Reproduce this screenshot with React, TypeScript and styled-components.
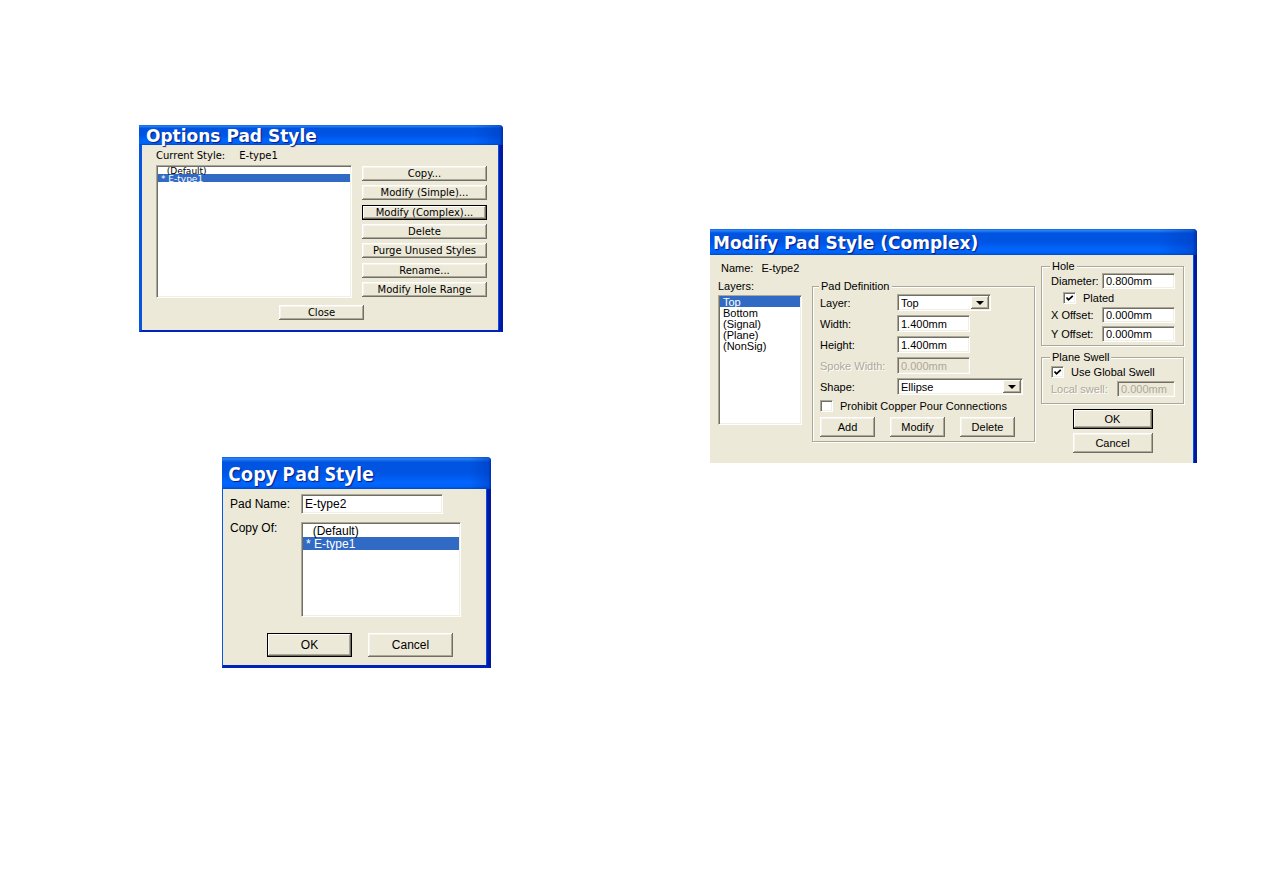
import React from 'react';
import styled, { createGlobalStyle, css } from 'styled-components';

const face = '#ece9d8';
const shade = '#aca899';
const dark = '#716f64';
const highlight = '#316ac5';

const GlobalStyle = createGlobalStyle`
  *, *::before, *::after { box-sizing: border-box; }
  body { margin: 0; background: #fff; }
  button, input, select { font: inherit; color: inherit; margin: 0; border-radius: 0; }
`;

const Page = styled.main`
  display: grid;
  grid-template-columns: 139fr 364fr 207fr 487fr 66fr;
  align-items: start;
  min-height: 100vh;
  color: #000;
`;

const LeftColumn = styled.div`
  grid-column: 2;
  display: flex;
  flex-direction: column;
  gap: 125px;
  padding: 125px 0 40px;
`;

const RightColumn = styled.div`
  grid-column: 4;
  padding: 229px 0 40px;
`;

const Dialog = styled.section<{ $font: string }>`
  font: ${p => p.$font};
  background: ${face};
  border-top-right-radius: 4px;
  overflow: hidden;
`;

const TitleBar = styled.h2<{ $font: string; $height: number; $indent: number }>`
  margin: 0;
  height: ${p => p.$height}px;
  padding: 1px 0 0 ${p => p.$indent}px;
  font: ${p => p.$font};
  line-height: ${p => p.$height}px;
  color: #fff;
  text-shadow: 1px 1px 1px #0a1883;
  white-space: nowrap;
  background:
    linear-gradient(to right, transparent 92%, rgba(0, 60, 190, 0.5) 99%, #0030b0),
    linear-gradient(#0b62e8 0, #2a83f5 6%, #0054e0 16%, #0054e3 50%, #0066ff 80%, #0062f5 92%, #0048c8 100%);
`;

const Frame = styled.div<{ $left: number; $right: number; $bottom: number }>`
  border-style: solid;
  border-width: 0 ${p => p.$right}px ${p => p.$bottom}px ${p => p.$left}px;
  border-color: transparent #0019a0 #0024b8 #0855dd;
  box-shadow: inset -1px 0 #0050e8;
`;

const PushButton = styled.button<{ $width?: number; $height: number; $default?: boolean }>`
  display: block;
  flex: none;
  width: ${p => (p.$width ? `${p.$width}px` : '100%')};
  height: ${p => p.$height}px;
  padding: 0;
  border: 0;
  line-height: ${p => p.$height - 2}px;
  text-align: center;
  white-space: nowrap;
  background: ${face};
  box-shadow: inset -1px -1px ${dark}, inset 1px 1px #fff, inset -2px -2px ${shade}, inset 2px 2px #f6f4ea;
  ${p => p.$default && css`
    box-shadow: inset 0 0 0 1px #000, inset -2px -2px ${dark}, inset 2px 2px #fff, inset -3px -3px ${shade};
  `}
`;

const sunken = css`
  border: 1px solid;
  border-color: ${shade} #fff #fff ${shade};
  background: #fff;
  box-shadow: inset 1px 1px ${dark}, inset -1px -1px #f1efe2;
`;

const TextInput = styled.input<{ $width: number; $height: number }>`
  ${sunken}
  display: block;
  width: ${p => p.$width}px;
  height: ${p => p.$height}px;
  padding: 0 3px;
  outline: 0;
  &:disabled {
    background: ${face};
    color: ${shade};
    opacity: 1;
  }
`;

const ListBox = styled.select<{ $height: number; $row: number; $top?: number }>`
  ${sunken}
  appearance: none;
  display: block;
  width: 100%;
  height: ${p => p.$height}px;
  padding: ${p => p.$top ?? 1}px 1px 1px;
  outline: 0;
  overflow: hidden;
  option {
    display: block;
    height: ${p => p.$row}px;
    min-height: 0;
    padding: 0 0 0 3px;
    line-height: ${p => p.$row}px;
    color: #000;
    white-space: pre;
  }
  option:checked {
    background: linear-gradient(${highlight}, ${highlight});
    -webkit-text-fill-color: #fff;
  }
`;

const CompactListBox = styled(ListBox)`
  font-size: 9px;
`;

const ComboFrame = styled.span<{ $width: number }>`
  ${sunken}
  display: grid;
  grid-template-columns: 1fr 18px;
  width: ${p => p.$width}px;
  height: 17px;
  padding: 1px;
`;

const ComboSelect = styled.select`
  appearance: none;
  grid-area: 1 / 1 / 2 / 3;
  height: 13px;
  padding: 1px 20px 0 2px;
  border: 0;
  outline: 0;
  line-height: 13px;
  background: transparent;
`;

const ComboArrow = styled.span`
  grid-area: 1 / 2;
  display: grid;
  place-items: center;
  height: 13px;
  pointer-events: none;
  background: ${face};
  box-shadow: inset -1px -1px ${dark}, inset 1px 1px #fff, inset -2px -2px ${shade};
`;

const Tick = styled.input`
  ${sunken}
  appearance: none;
  flex: none;
  width: 13px;
  height: 12px;
  &:checked {
    background: #fff url("data:image/svg+xml,%3Csvg xmlns='http://www.w3.org/2000/svg' viewBox='0 0 9 8'%3E%3Cpath d='M1.5 3.5 3.5 5.8 7.8 1.8' fill='none' stroke='%23000' stroke-width='1.8'/%3E%3C/svg%3E") center / 9px 8px no-repeat;
  }
`;

const TickRow = styled.label<{ $indent?: number; $height: number }>`
  display: flex;
  align-items: center;
  gap: 7px;
  height: ${p => p.$height}px;
  padding-left: ${p => p.$indent ?? 0}px;
  white-space: nowrap;
`;

const Group = styled.fieldset<{ $pad: string; $gap: number }>`
  display: flex;
  flex-direction: column;
  gap: ${p => p.$gap}px;
  min-width: 0;
  margin: 0;
  padding: ${p => p.$pad};
  border: 1px solid ${shade};
  box-shadow: 1px 1px #fff, inset 1px 1px #fff;
  legend {
    height: 12px;
    margin-left: -1px;
    padding: 0 2px;
    line-height: 12px;
    background: ${face};
  }
`;

const FieldRow = styled.div<{ $label?: number }>`
  display: grid;
  grid-template-columns: ${p => (p.$label ? `${p.$label}px` : '1fr')} auto;
  align-items: center;
  white-space: nowrap;
  ${p => p.$label && css`justify-content: start;`}
`;

const Label = styled.label<{ $disabled?: boolean }>`
  ${p => p.$disabled && css`
    color: ${shade};
    text-shadow: 1px 1px #fff;
  `}
`;

/* Options Pad Style */

const OptionsBody = styled(Frame)`
  display: grid;
  grid-template-columns: 1fr 125px;
  column-gap: 10px;
  padding: 5px 12px 10px 14px;
`;

const CurrentStyle = styled.p`
  grid-column: 1 / 3;
  display: flex;
  gap: 14px;
  margin: 0 0 3px;
  line-height: 12px;
`;

const ButtonStack = styled.div`
  display: flex;
  flex-direction: column;
  justify-content: space-between;
  padding: 1px 0;
`;

const OptionsFooter = styled.div`
  grid-column: 1 / 3;
  display: flex;
  justify-content: center;
  padding-top: 7px;
`;

/* Copy Pad Style */

const CopyDialog = styled(Dialog)`
  margin: 0 12px 0 83px;
`;

const CopyBody = styled(Frame)`
  display: grid;
  grid-template-columns: 71px 1fr;
  row-gap: 8px;
  padding: 5px 26px 8px 7px;
`;

const CopyLabel = styled(Label)<{ $centered?: boolean }>`
  align-self: ${p => (p.$centered ? 'center' : 'start')};
  line-height: 12px;
`;

const CopyFooter = styled.div`
  grid-column: 1 / 3;
  display: flex;
  justify-content: flex-end;
  gap: 16px;
  padding: 8px 8px 0 0;
`;

/* Modify Pad Style (Complex) */

const ModifyBody = styled(Frame)`
  display: grid;
  grid-template-columns: 84px 1fr 143px;
  grid-template-rows: 14px auto;
  gap: 5px 6px;
  padding: 6px 10px 10px 8px;
`;

const NameLine = styled.p`
  grid-column: 1 / 3;
  display: flex;
  gap: 8px;
  margin: 0;
  padding-left: 3px;
  line-height: 14px;
`;

const Layers = styled.div`
  display: flex;
  flex-direction: column;
  gap: 2px;
  line-height: 13px;
`;

const Definition = styled.div`
  padding-left: 4px;
`;

const Side = styled.div`
  grid-area: 1 / 3 / 3 / 4;
  display: flex;
  flex-direction: column;
  gap: 5px;
  margin-top: -1px;
`;

const SideButtons = styled.div`
  display: flex;
  flex-direction: column;
  align-items: center;
  gap: 4px;
`;

const ButtonRow = styled.div`
  display: flex;
  gap: 15px;
`;

function Combo({ id, width, value }: { id: string; width: number; value: string }) {
  return (
    <ComboFrame $width={width}>
      <ComboSelect id={id} defaultValue={value}>
        <option>{value}</option>
      </ComboSelect>
      <ComboArrow>
        <svg width="8" height="4" viewBox="0 0 8 4"><path d="M0 0H8L4 4Z" /></svg>
      </ComboArrow>
    </ComboFrame>
  );
}

type FieldProps = { id: string; label: string; value: string; labelWidth?: number; width: number; height: number; disabled?: boolean };

function Field({ id, label, value, labelWidth, width, height, disabled }: FieldProps) {
  return (
    <FieldRow $label={labelWidth}>
      <Label htmlFor={id} $disabled={disabled}>{label}</Label>
      <TextInput id={id} defaultValue={value} disabled={disabled} $width={width} $height={height} />
    </FieldRow>
  );
}

function OptionsPadStyle() {
  return (
    <Dialog $font='10px "DejaVu Sans", sans-serif'>
      <TitleBar $font='bold 17px "DejaVu Sans", sans-serif' $height={20} $indent={7}>Options Pad Style</TitleBar>
      <OptionsBody $left={3} $right={4} $bottom={2}>
        <CurrentStyle><span>Current Style:</span><span>E-type1</span></CurrentStyle>
        <CompactListBox size={8} $height={133} $row={8} $top={0} aria-label="Pad styles" defaultValue="e1">
          <option value="d">{'\u00a0\u00a0(Default)'}</option>
          <option value="e1">* E-type1</option>
        </CompactListBox>
        <ButtonStack>
          <PushButton $height={15}>Copy...</PushButton>
          <PushButton $height={15}>Modify (Simple)...</PushButton>
          <PushButton $height={15} $default>Modify (Complex)...</PushButton>
          <PushButton $height={15}>Delete</PushButton>
          <PushButton $height={15}>Purge Unused Styles</PushButton>
          <PushButton $height={15}>Rename...</PushButton>
          <PushButton $height={15}>Modify Hole Range</PushButton>
        </ButtonStack>
        <OptionsFooter><PushButton $width={85} $height={15}>Close</PushButton></OptionsFooter>
      </OptionsBody>
    </Dialog>
  );
}

function CopyPadStyle() {
  return (
    <CopyDialog $font='12px "Liberation Sans", Arial, sans-serif'>
      <TitleBar $font='bold 20px "Open Sans", sans-serif' $height={32} $indent={6}>Copy Pad Style</TitleBar>
      <CopyBody $left={1} $right={4} $bottom={3}>
        <CopyLabel htmlFor="pad-name" $centered>Pad Name:</CopyLabel>
        <TextInput id="pad-name" defaultValue="E-type2" $width={142} $height={20} />
        <CopyLabel htmlFor="copy-of">Copy Of:</CopyLabel>
        <ListBox id="copy-of" size={6} $height={95} $row={13} defaultValue="e1">
          <option value="d">{'\u00a0\u00a0(Default)'}</option>
          <option value="e1">* E-type1</option>
        </ListBox>
        <CopyFooter>
          <PushButton $width={85} $height={24} $default>OK</PushButton>
          <PushButton $width={85} $height={24}>Cancel</PushButton>
        </CopyFooter>
      </CopyBody>
    </CopyDialog>
  );
}

function ModifyPadStyle() {
  return (
    <Dialog $font='11px "Liberation Sans", Arial, sans-serif'>
      <TitleBar $font='bold 17px "DejaVu Sans", sans-serif' $height={26} $indent={3}>Modify Pad Style (Complex)</TitleBar>
      <ModifyBody $left={0} $right={3} $bottom={0}>
        <NameLine><span>Name:</span><span>E-type2</span></NameLine>
        <Layers>
          <Label htmlFor="layers">Layers:</Label>
          <ListBox id="layers" size={8} $height={130} $row={11} $top={0} defaultValue="Top">
            <option>Top</option>
            <option>Bottom</option>
            <option>(Signal)</option>
            <option>(Plane)</option>
            <option>(NonSig)</option>
          </ListBox>
        </Layers>
        <Definition>
          <Group $pad="2px 6px 4px 7px" $gap={4}>
            <legend>Pad Definition</legend>
            <FieldRow $label={77}>
              <Label htmlFor="layer">Layer:</Label>
              <Combo id="layer" width={94} value="Top" />
            </FieldRow>
            <Field id="width" label="Width:" value="1.400mm" labelWidth={77} width={73} height={17} />
            <Field id="height" label="Height:" value="1.400mm" labelWidth={77} width={73} height={17} />
            <Field id="spoke" label="Spoke Width:" value="0.000mm" labelWidth={77} width={73} height={17} disabled />
            <FieldRow $label={77}>
              <Label htmlFor="shape">Shape:</Label>
              <Combo id="shape" width={126} value="Ellipse" />
            </FieldRow>
            <TickRow $height={14}><Tick type="checkbox" />Prohibit Copper Pour Connections</TickRow>
            <ButtonRow>
              <PushButton $width={55} $height={20}>Add</PushButton>
              <PushButton $width={55} $height={20}>Modify</PushButton>
              <PushButton $width={55} $height={20}>Delete</PushButton>
            </ButtonRow>
          </Group>
        </Definition>
        <Side>
          <Group $pad="1px 8px 3px 9px" $gap={3}>
            <legend>Hole</legend>
            <Field id="diameter" label="Diameter:" value="0.800mm" width={73} height={16} />
            <TickRow $height={12} $indent={12}><Tick type="checkbox" defaultChecked />Plated</TickRow>
            <Field id="x-offset" label="X Offset:" value="0.000mm" width={73} height={16} />
            <Field id="y-offset" label="Y Offset:" value="0.000mm" width={73} height={16} />
          </Group>
          <Group $pad="2px 8px 6px 9px" $gap={3}>
            <legend>Plane Swell</legend>
            <TickRow $height={13}><Tick type="checkbox" defaultChecked />Use Global Swell</TickRow>
            <Field id="swell" label="Local swell:" value="0.000mm" width={58} height={16} disabled />
          </Group>
          <SideButtons>
            <PushButton $width={80} $height={20} $default>OK</PushButton>
            <PushButton $width={80} $height={20}>Cancel</PushButton>
          </SideButtons>
        </Side>
      </ModifyBody>
    </Dialog>
  );
}

export default function App() {
  return (
    <>
      <GlobalStyle />
      <Page>
        <LeftColumn>
          <OptionsPadStyle />
          <CopyPadStyle />
        </LeftColumn>
        <RightColumn>
          <ModifyPadStyle />
        </RightColumn>
      </Page>
    </>
  );
}
